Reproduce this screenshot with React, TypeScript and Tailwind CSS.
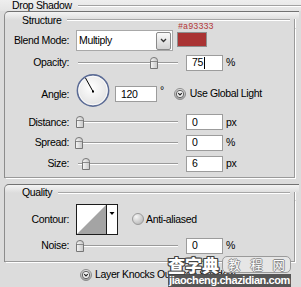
import React from "react";

const Thumb = () => (
  <svg width="8" height="12" viewBox="0 0 8 12">
    <defs>
      <linearGradient id="thumbFill" x1="0" x2="1">
        <stop offset="0" stopColor="#f6f6f6" />
        <stop offset="1" stopColor="#c6c6c6" />
      </linearGradient>
    </defs>
    <path d="M0.5 11.5V3.5Q0.5 0.5 4 0.5Q7.5 0.5 7.5 3.5V11.5Z" fill="url(#thumbFill)" stroke="#767676" />
    <path d="M1 4.5H7" stroke="#8a8a8a" />
  </svg>
);

const Slider = ({ at }: { at: number }) => (
  <div className="relative h-[12px] w-[106px] shrink-0">
    <div className="absolute left-[2px] top-[5px] h-[2px] w-[100px] border-t border-[#9a9a9a] bg-white" />
    <div className="absolute top-0 flex" style={{ left: at }}>
      <Thumb />
    </div>
  </div>
);

const Field = ({ value, caret, w = "w-[37px]" }: { value: string; caret?: boolean; w?: string }) => (
  <div className={`flex h-[16px] shrink-0 items-center border border-[#9c9c9c] bg-white pl-[5px] ${w}`}>
    <span>{value}</span>
    {caret && <span className="ml-px h-[12px] w-px bg-black" />}
  </div>
);

const Label = ({ text, className = "" }: { text: string; className?: string }) => (
  <div className={`w-[64px] shrink-0 text-right ${className}`}>{text}</div>
);

const SliderRow = ({ label, at, value, unit, h, caret }: { label: string; at: number; value: string; unit: string; h: string; caret?: boolean }) => (
  <div className={`flex items-center ${h}`}>
    <Label text={label} />
    <div className="ml-[7px] flex items-center">
      <Slider at={at} />
      <div className="ml-[4px]">
        <Field value={value} caret={caret} />
      </div>
      <span className="ml-[3px]">{unit}</span>
    </div>
  </div>
);

const RoundCheck = () => (
  <svg width="12" height="12" viewBox="0 0 12 12">
    <defs>
      <linearGradient id="checkFill" x1="0" y1="0" x2="0" y2="1">
        <stop offset="0" stopColor="#e8e8e8" />
        <stop offset="1" stopColor="#a6a6a6" />
      </linearGradient>
    </defs>
    <circle cx="6" cy="6" r="5.5" fill="url(#checkFill)" stroke="#8c8c8c" />
    <circle cx="6" cy="6" r="3.7" fill="#eeeeee" stroke="#555" strokeWidth="0.9" />
    <path d="M4.2 5.1L6 6.9L7.8 5.1" stroke="#222" strokeWidth="1.2" fill="none" />
  </svg>
);

const Radio = () => (
  <svg width="12" height="12" viewBox="0 0 12 12">
    <defs>
      <radialGradient id="radioFill" cx="0.35" cy="0.3" r="0.8">
        <stop offset="0" stopColor="#f6f6f6" />
        <stop offset="1" stopColor="#b4b4b4" />
      </radialGradient>
    </defs>
    <circle cx="6" cy="6" r="5.5" fill="url(#radioFill)" stroke="#9a9a9a" />
  </svg>
);

const Dial = () => (
  <svg width="34" height="33" viewBox="0 0 34 33">
    <defs>
      <radialGradient id="dialFill" cx="0.45" cy="0.4" r="0.65">
        <stop offset="0" stopColor="#ffffff" />
        <stop offset="1" stopColor="#e0e0e0" />
      </radialGradient>
    </defs>
    <circle cx="17" cy="16.5" r="15.6" fill="url(#dialFill)" stroke="#5c6c96" strokeWidth="1.6" />
    <circle cx="17" cy="16.5" r="14.3" fill="none" stroke="#fff" strokeWidth="0.8" />
    <path d="M17 17.5L9.5 4" stroke="#000" strokeWidth="1" />
    <rect x="16" y="16.5" width="2" height="2" fill="#000" />
  </svg>
);

const Panel = ({ title, legendH, tickH, children }: { title: string; legendH: string; tickH: string; children: React.ReactNode }) => (
  <div className="ml-[4px] w-[295px] rounded-tl-[5px] border-l border-t border-l-[#8c8c8c] border-t-[#727272] bg-[linear-gradient(#f4f4f4,#dcdcdc_8px)]">
    <div className={`mr-[4px] flex items-center ${legendH}`}>
      <span className="pl-[17px]">{title}</span>
      <div className="ml-[6px] h-[2px] flex-1 border-t border-[#a6a6a6] bg-white" />
      <div className={`ml-[4px] w-px self-end bg-[#9a9a9a] shadow-[1px_0_0_#fff] ${tickH}`} />
    </div>
    <div className="mr-[4px] border-b border-r border-[#9a9a9a] shadow-[1px_1px_0_#fff]">{children}</div>
  </div>
);

export default function App() {
  return (
    <div className="relative h-[287px] w-[301px] overflow-hidden bg-[#dcdcdc] font-['Liberation_Sans',Arial,sans-serif] text-[10.5px] leading-none tracking-[-0.35px] text-black">
      <div className="flex h-[11px] items-center bg-[linear-gradient(#eeeeee,#e4e4e4)]">
        <span className="pl-[12px]">Drop Shadow</span>
        <div className="ml-[6px] mt-px h-[2px] flex-1 border-t border-[#a2a2a2] bg-white" />
      </div>

      <Panel title="Structure" legendH="h-[16px]" tickH="h-[9px]">
        <div className="flex h-[25px] items-center">
          <Label text="Blend Mode:" />
          <div className="ml-[7px] flex h-[21px] w-[97px] items-center justify-between border border-[#a8a8a8] bg-white pl-[2px] pr-px">
            <span>Multiply</span>
            <div className="flex h-[18px] w-[15px] items-center justify-center rounded-[2px] border border-[#8a8a8a] bg-[linear-gradient(#fafafa,#d2d2d2)]">
              <svg width="7" height="5" viewBox="0 0 7 5">
                <path d="M1 1L3.5 3.5L6 1" stroke="#333" strokeWidth="1.3" fill="none" />
              </svg>
            </div>
          </div>
          <div className="relative mb-[2px] ml-[4px] h-[15px] w-[30px] border border-[#8e8e8e] bg-[#a93333]">
            <span className="absolute -top-[11px] left-0 font-['Liberation_Mono',monospace] text-[8.5px] leading-[10px] tracking-normal text-[#b33636]">
              #a93333
            </span>
          </div>
        </div>

        <SliderRow label="Opacity:" at={74} value="75" unit="%" h="h-[19px]" caret />

        <div className="flex h-[40px] items-center">
          <Label text="Angle:" className="mt-[4px]" />
          <div className="mb-[3px] ml-[7px] flex">
            <Dial />
          </div>
          <div className="ml-[5px] mt-[4px]">
            <Field value="120" w="w-[42px]" />
          </div>
          <span className="mb-[4px] ml-[3px]">°</span>
          <div className="ml-[10px] mt-[3px] flex items-center">
            <RoundCheck />
            <span className="ml-[4px]">Use Global Light</span>
          </div>
        </div>

        <SliderRow label="Distance:" at={0} value="0" unit="px" h="h-[20px]" />
        <SliderRow label="Spread:" at={-1} value="0" unit="%" h="h-[21px]" />
        <SliderRow label="Size:" at={6} value="6" unit="px" h="h-[21px]" />
        <div className="h-[3px]" />
      </Panel>

      <div className="mt-[6px]">
        <Panel title="Quality" legendH="h-[15px]" tickH="h-[8px]">
          <div className="h-[2px]" />
          <div className="flex h-[34px] items-center">
            <Label text="Contour:" />
            <div className="ml-[7px] flex h-[31px] w-[42px] border border-[#1c1c1c] bg-white">
              <svg width="29" height="29" viewBox="0 0 29 29" className="shrink-0">
                <polygon points="0,29 29,0 29,29" fill="#a4a4a4" />
              </svg>
              <div className="h-full w-[11px] border-l border-[#1c1c1c]">
                <svg width="10" height="29" viewBox="0 0 10 29">
                  <polygon points="2.5,7 7.5,7 5,10" fill="#000" />
                </svg>
              </div>
            </div>
            <div className="ml-[14px] flex items-center">
              <Radio />
              <span className="ml-[2px]">Anti-aliased</span>
            </div>
          </div>
          <SliderRow label="Noise:" at={0} value="0" unit="%" h="h-[19px]" />
          <div className="h-[6px]" />
        </Panel>
      </div>

      <div className="flex h-[25px] items-center pl-[80px]">
        <RoundCheck />
        <span className="ml-[3px]">Layer Knocks Out Drop Shadow</span>
      </div>

      <div className="absolute left-[168px] top-[255px] w-[123px] tracking-normal">
        <div className="flex h-[19px] items-center">
          <span className="font-['Noto_Sans_CJK_SC',sans-serif] text-[17px] font-black leading-none text-white [text-shadow:1px_0_0_#444,-1px_0_0_#444,0_1px_0_#444,0_-1px_0_#444,1px_1px_0_#444,-1px_-1px_0_#444,1px_-1px_0_#444,-1px_1px_0_#444]">
            查字典
          </span>
          <div className="ml-[3px] flex h-[17px] flex-1 items-center justify-around rounded-[5px] border border-[#9a9a9a] bg-[#e6e6e6] font-['Noto_Sans_CJK_SC',sans-serif] text-[12px] leading-none text-white [text-shadow:1px_0_0_#8a8a8a,-1px_0_0_#8a8a8a,0_1px_0_#8a8a8a,0_-1px_0_#8a8a8a]">
            <span>教</span>
            <span>程</span>
            <span>网</span>
          </div>
        </div>
        <div className="flex h-[13px] items-center justify-end bg-[#565656] pr-px text-[11px] font-bold tracking-[-0.4px] text-white">
          jiaocheng.chazidian.com
        </div>
      </div>
    </div>
  );
}
